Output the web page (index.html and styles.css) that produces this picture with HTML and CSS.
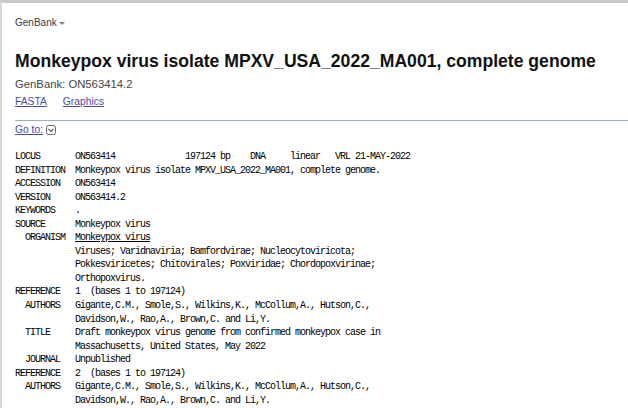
FILE: index.html
```html
<!DOCTYPE html>
<html lang="en">
  <head>
    <meta charset="UTF-8" />
    <meta name="viewport" content="width=device-width, initial-scale=1.0" />
    <title>Monkeypox virus isolate MPXV_USA_2022_MA001, complete genome</title>
    <link rel="stylesheet" href="styles.css">
  </head>
  <body>
    <div class="page">
      <div class="db-menu">
        GenBank<span class="db-arrow"></span>
      </div>

      <h1 class="title">Monkeypox virus isolate MPXV_USA_2022_MA001, complete genome</h1>
      <p class="accession">GenBank: ON563414.2</p>

      <div class="links">
        <a href="#">FASTA</a>
        <a href="#">Graphics</a>
      </div>

      <div class="goto">
        <a href="#">Go to:</a>
        <span class="goto-btn">
          <svg width="10" height="10" viewBox="0 0 10 10">
            <rect x="0.5" y="0.5" width="9" height="9" rx="2" fill="none" stroke="#666" />
            <path d="M2.5 4 L5 6.5 L7.5 4" fill="none" stroke="#555" stroke-width="1.1" />
          </svg>
        </span>
      </div>

<pre class="flat">LOCUS       ON563414              197124 bp    DNA     linear   VRL 21-MAY-2022
DEFINITION  Monkeypox virus isolate MPXV_USA_2022_MA001, complete genome.
ACCESSION   ON563414
VERSION     ON563414.2
KEYWORDS    .
SOURCE      Monkeypox virus
  ORGANISM  <a href="#">Monkeypox virus</a>
            Viruses; Varidnaviria; Bamfordvirae; Nucleocytoviricota;
            Pokkesviricetes; Chitovirales; Poxviridae; Chordopoxvirinae;
            Orthopoxvirus.
REFERENCE   1  (bases 1 to 197124)
  AUTHORS   Gigante,C.M., Smole,S., Wilkins,K., McCollum,A., Hutson,C.,
            Davidson,W., Rao,A., Brown,C. and Li,Y.
  TITLE     Draft monkeypox virus genome from confirmed monkeypox case in
            Massachusetts, United States, May 2022
  JOURNAL   Unpublished
REFERENCE   2  (bases 1 to 197124)
  AUTHORS   Gigante,C.M., Smole,S., Wilkins,K., McCollum,A., Hutson,C.,
            Davidson,W., Rao,A., Brown,C. and Li,Y.
</pre>
    </div>
  </body>
</html>
```

FILE: styles.css
```css
html {
  background: #ffffff;
}
body {
  margin: 0;
  font-family: "Liberation Sans", Arial, sans-serif;
  color: #333;
}
.page {
  height: 405px;
  border-top: 3px solid #c9c9c9;
  border-left: 2px solid #d3d3d3;
  padding-left: 13px;
  overflow: hidden;
}
.db-menu {
  margin-top: 13px;
  font-size: 10px;
  line-height: 14px;
  color: #3a3a3a;
}
.db-arrow {
  display: inline-block;
  width: 0;
  height: 0;
  border-left: 3px solid transparent;
  border-right: 3px solid transparent;
  border-top: 3px solid #808080;
  vertical-align: middle;
  margin-left: 2px;
  margin-top: 1px;
}
.title {
  margin: 20px 0 0;
  font-size: 17.6px;
  line-height: 22px;
  font-weight: bold;
  color: #111;
  white-space: nowrap;
}
.accession {
  margin: 5px 0 0;
  font-size: 11.3px;
  line-height: 14px;
  color: #444;
}
.links {
  display: flex;
  gap: 16px;
  margin-top: 4px;
  font-size: 10.3px;
  line-height: 14px;
}
.links a,
.goto a {
  color: #4b4ba8;
  text-decoration: underline;
}
.goto {
  display: flex;
  align-items: center;
  gap: 3px;
  margin-top: 11px;
  border-top: 1px solid #97afc6;
  padding-top: 2px;
  font-size: 10.3px;
  line-height: 14px;
}
.goto-btn {
  display: inline-flex;
}
.flat {
  margin: 13px 0 0;
  font-family: "Liberation Mono", "DejaVu Sans Mono", monospace;
  font-size: 10px;
  letter-spacing: -1px;
  line-height: 13.55px;
  color: #000;
}
.flat a {
  color: #000;
  text-decoration: underline;
}
```
